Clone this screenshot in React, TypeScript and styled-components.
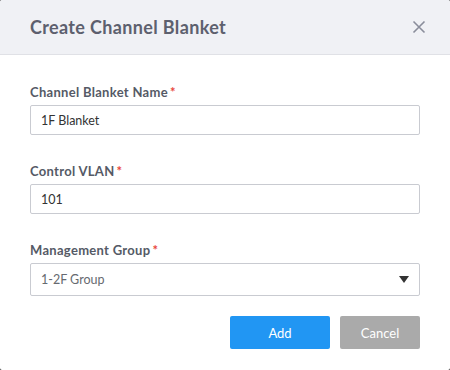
import React from "react";
import styled, { createGlobalStyle } from "styled-components";

const Global = createGlobalStyle`
  html, body { margin: 0; padding: 0; background: #2b2b2b; }
  body { font-family: Lato, "Noto Sans", sans-serif; }
  * { box-sizing: border-box; }
`;

const Dialog = styled.div`
  width: 450px;
  height: 370px;
  background: #ffffff;
  border-radius: 2px;
  overflow: hidden;
  display: flex;
  flex-direction: column;
`;

const Header = styled.div`
  height: 55px;
  background: #f0f1f5;
  border-bottom: 1px solid #e0e1e6;
  display: flex;
  align-items: center;
  justify-content: space-between;
  padding: 0 24px 0 30px;
`;

const Title = styled.h1`
  margin: 0;
  font-size: 18px;
  font-weight: 700;
  letter-spacing: 0.35px;
  color: #5d606e;
`;

const Close = styled.button`
  border: 0;
  background: transparent;
  padding: 0;
  width: 14px;
  height: 14px;
  display: flex;
  cursor: pointer;
`;

const Body = styled.div`
  padding: 28px 30px 0 30px;
  display: flex;
  flex-direction: column;
  gap: 27px;
`;

const Field = styled.div`
  display: flex;
  flex-direction: column;
  gap: 4px;
`;

const Label = styled.label`
  font-size: 13px;
  font-weight: 700;
  letter-spacing: 0.3px;
  color: #555a66;
  line-height: 18px;
`;

const Star = styled.span`
  color: #e8453c;
  margin-left: 2px;
`;

const Input = styled.div<{ $h?: number; $muted?: boolean }>`
  height: ${(p) => p.$h ?? 30}px;
  border: 1px solid #c9cbd1;
  border-radius: 2px;
  display: flex;
  align-items: center;
  justify-content: space-between;
  padding: 0 10px;
  font-size: 12.5px;
  color: ${(p) => (p.$muted ? "#666a70" : "#333333")};
`;

const Footer = styled.div`
  display: flex;
  justify-content: flex-end;
  gap: 10px;
  padding: 20px 30px 0 30px;
`;

const Button = styled.button<{ $primary?: boolean }>`
  width: ${(p) => (p.$primary ? 100 : 80)}px;
  height: 33px;
  border: 0;
  border-radius: 2px;
  background: ${(p) => (p.$primary ? "#2196f3" : "#aaaaaa")};
  color: #ffffff;
  font-family: inherit;
  font-size: 13px;
  font-weight: 400;
  cursor: pointer;
`;

export default function App() {
  return (
    <>
      <Global />
      <Dialog>
        <Header>
          <Title>Create Channel Blanket</Title>
          <Close aria-label="close">
            <svg width="14" height="14" viewBox="0 0 14 14">
              <path d="M1.5 1.5 L12.5 12.5 M12.5 1.5 L1.5 12.5" stroke="#8a8d9b" strokeWidth="1.6" />
            </svg>
          </Close>
        </Header>
        <Body>
          <Field>
            <Label>Channel Blanket Name<Star>*</Star></Label>
            <Input>1F Blanket</Input>
          </Field>
          <Field>
            <Label>Control VLAN<Star>*</Star></Label>
            <Input>101</Input>
          </Field>
          <Field>
            <Label>Management Group<Star>*</Star></Label>
            <Input $h={33} $muted>
              1-2F Group
              <svg width="10" height="7" viewBox="0 0 10 7">
                <path d="M0 0 H10 L5 7 Z" fill="#333" />
              </svg>
            </Input>
          </Field>
        </Body>
        <Footer>
          <Button $primary>Add</Button>
          <Button>Cancel</Button>
        </Footer>
      </Dialog>
    </>
  );
}
